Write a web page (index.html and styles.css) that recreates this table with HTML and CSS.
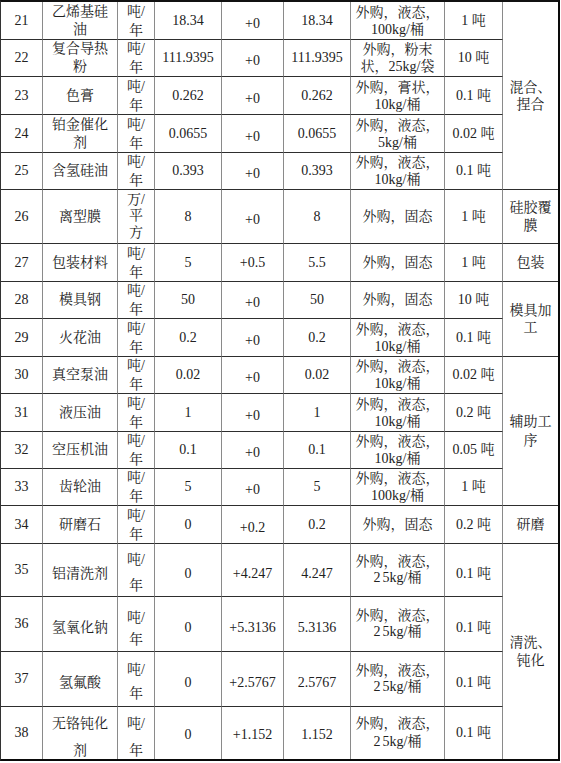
FILE: index.html
```html
<!DOCTYPE html>
<html lang="zh-CN">
<head>
<meta charset="utf-8">
<title>原辅材料表</title>
<link rel="stylesheet" href="styles.css">
</head>
<body>
<div class="sheet">
  <!-- 21 -->
  <div class="c">21</div>
  <div class="c">乙烯基硅<br>油</div>
  <div class="c u">吨/<br>年</div>
  <div class="c">18.34</div>
  <div class="c dn">+0</div>
  <div class="c">18.34</div>
  <div class="c s">外购，液态，<br>100kg/桶</div>
  <div class="c">1 吨</div>
  <div class="c last span5 p1">混合、<br>捏合</div>
  <!-- 22 -->
  <div class="c">22</div>
  <div class="c">复合导热<br>粉</div>
  <div class="c u">吨/<br>年</div>
  <div class="c">111.9395</div>
  <div class="c dn">+0</div>
  <div class="c">111.9395</div>
  <div class="c s">外购，粉末<br>状，25kg/袋</div>
  <div class="c">10 吨</div>
  <!-- 23 -->
  <div class="c">23</div>
  <div class="c">色膏</div>
  <div class="c u">吨/<br>年</div>
  <div class="c">0.262</div>
  <div class="c dn">+0</div>
  <div class="c">0.262</div>
  <div class="c s">外购，膏状，<br>10kg/桶</div>
  <div class="c">0.1 吨</div>
  <!-- 24 -->
  <div class="c">24</div>
  <div class="c">铂金催化<br>剂</div>
  <div class="c u">吨/<br>年</div>
  <div class="c">0.0655</div>
  <div class="c dn">+0</div>
  <div class="c">0.0655</div>
  <div class="c s">外购，液态，<br>5kg/桶</div>
  <div class="c">0.02 吨</div>
  <!-- 25 -->
  <div class="c">25</div>
  <div class="c">含氢硅油</div>
  <div class="c u">吨/<br>年</div>
  <div class="c">0.393</div>
  <div class="c dn">+0</div>
  <div class="c">0.393</div>
  <div class="c s">外购，液态，<br>10kg/桶</div>
  <div class="c">0.1 吨</div>
  <!-- 26 -->
  <div class="c">26</div>
  <div class="c">离型膜</div>
  <div class="c u3">万/<br>平<br>方</div>
  <div class="c">8</div>
  <div class="c dn">+0</div>
  <div class="c">8</div>
  <div class="c">外购，固态</div>
  <div class="c">1 吨</div>
  <div class="c last">硅胶覆<br>膜</div>
  <!-- 27 -->
  <div class="c">27</div>
  <div class="c">包装材料</div>
  <div class="c u">吨/<br>年</div>
  <div class="c">5</div>
  <div class="c">+0.5</div>
  <div class="c">5.5</div>
  <div class="c">外购，固态</div>
  <div class="c">1 吨</div>
  <div class="c last">包装</div>
  <!-- 28 -->
  <div class="c">28</div>
  <div class="c">模具钢</div>
  <div class="c u">吨/<br>年</div>
  <div class="c">50</div>
  <div class="c dn">+0</div>
  <div class="c">50</div>
  <div class="c">外购，固态</div>
  <div class="c">10 吨</div>
  <div class="c last span2 p2">模具加<br>工</div>
  <!-- 29 -->
  <div class="c">29</div>
  <div class="c">火花油</div>
  <div class="c u">吨/<br>年</div>
  <div class="c">0.2</div>
  <div class="c dn">+0</div>
  <div class="c">0.2</div>
  <div class="c s">外购，液态，<br>10kg/桶</div>
  <div class="c">0.1 吨</div>
  <!-- 30 -->
  <div class="c">30</div>
  <div class="c">真空泵油</div>
  <div class="c u">吨/<br>年</div>
  <div class="c">0.02</div>
  <div class="c dn">+0</div>
  <div class="c">0.02</div>
  <div class="c s">外购，液态，<br>10kg/桶</div>
  <div class="c">0.02 吨</div>
  <div class="c last span4 p4">辅助工<br>序</div>
  <!-- 31 -->
  <div class="c">31</div>
  <div class="c">液压油</div>
  <div class="c u">吨/<br>年</div>
  <div class="c">1</div>
  <div class="c dn">+0</div>
  <div class="c">1</div>
  <div class="c s">外购，液态，<br>10kg/桶</div>
  <div class="c">0.2 吨</div>
  <!-- 32 -->
  <div class="c">32</div>
  <div class="c">空压机油</div>
  <div class="c u">吨/<br>年</div>
  <div class="c">0.1</div>
  <div class="c dn">+0</div>
  <div class="c">0.1</div>
  <div class="c s">外购，液态，<br>10kg/桶</div>
  <div class="c">0.05 吨</div>
  <!-- 33 -->
  <div class="c">33</div>
  <div class="c">齿轮油</div>
  <div class="c u">吨/<br>年</div>
  <div class="c">5</div>
  <div class="c dn">+0</div>
  <div class="c">5</div>
  <div class="c s">外购，液态，<br>100kg/桶</div>
  <div class="c">1 吨</div>
  <!-- 34 -->
  <div class="c">34</div>
  <div class="c">研磨石</div>
  <div class="c u">吨/<br>年</div>
  <div class="c">0</div>
  <div class="c dn">+0.2</div>
  <div class="c">0.2</div>
  <div class="c">外购，固态</div>
  <div class="c">0.2 吨</div>
  <div class="c last">研磨</div>
  <!-- 35 -->
  <div class="c">35</div>
  <div class="c lo">铝清洗剂</div>
  <div class="c ua">吨/<br>年</div>
  <div class="c lo">0</div>
  <div class="c lo">+4.247</div>
  <div class="c lo">4.247</div>
  <div class="c s2"><span>外购，液态，<br><span class="sp">2</span>5kg/桶</span></div>
  <div class="c lo">0.1 吨</div>
  <div class="c last bot span4 p5">清洗、<br>钝化</div>
  <!-- 36 -->
  <div class="c">36</div>
  <div class="c lo">氢氧化钠</div>
  <div class="c ub">吨/<br>年</div>
  <div class="c lo">0</div>
  <div class="c lo">+5.3136</div>
  <div class="c lo">5.3136</div>
  <div class="c s2"><span>外购，液态，<br><span class="sp">2</span>5kg/桶</span></div>
  <div class="c lo">0.1 吨</div>
  <!-- 37 -->
  <div class="c">37</div>
  <div class="c lo">氢氟酸</div>
  <div class="c uc">吨/<br>年</div>
  <div class="c lo">0</div>
  <div class="c lo">+2.5767</div>
  <div class="c lo">2.5767</div>
  <div class="c s2"><span>外购，液态，<br><span class="sp">2</span>5kg/桶</span></div>
  <div class="c lo">0.1 吨</div>
  <!-- 38 -->
  <div class="c bot">38</div>
  <div class="c bot ud">无铬钝化<br>剂</div>
  <div class="c bot ud">吨/<br>年</div>
  <div class="c bot lo2">0</div>
  <div class="c bot lo2">+1.152</div>
  <div class="c bot lo2">1.152</div>
  <div class="c bot s3"><span>外购，液态，<br><span class="sp">2</span>5kg/桶</span></div>
  <div class="c bot">0.1 吨</div>
</div>
</body>
</html>
```
FILE: styles.css
```css
html, body {
  margin: 0;
  padding: 0;
  background: #ffffff;
}

.sheet {
  display: grid;
  width: max-content;
  grid-template-columns: 42px 75px 37px 67px 62px 67px 94px 58px 55px;
  grid-template-rows: 38px 37px 38px 38px 37px 54px 38px 37px 38px 37px 38px 37px 37px 38px 53px 55px 55px 52px;
  border-top: 2px solid #111111;
  border-left: 1px solid #333333;
  border-right: 2px solid #0a0a0a;
  border-bottom: 2px solid #0a0a0a;
  font-family: "Liberation Serif", "Noto Serif CJK SC", "Noto Sans CJK SC", serif;
  font-size: 14px;
  color: #222222;
}

.c {
  box-sizing: border-box;
  display: flex;
  align-items: center;
  justify-content: center;
  text-align: center;
  line-height: 18px;
  border-right: 1px solid #8a8a8a;
  border-bottom: 1px solid #2e2e2e;
  white-space: nowrap;
}

.last { border-right: none; grid-column: 9; }
.bot { border-bottom: none; }

.span2 { grid-row: span 2; }
.span4 { grid-row: span 4; }
.span5 { grid-row: span 5; }

.u { line-height: 19px; }
.u3 { line-height: 16.5px; }
.s { line-height: 17px; }
.s2 { line-height: 16px; }
.s3 { line-height: 18px; }
.dn { padding-top: 6px; }

.lo { padding-top: 8px; }
.lo2 { padding-top: 4px; }
.ua { line-height: 26px; padding-top: 5px; }
.ub { line-height: 22px; padding-top: 9px; }
.uc { line-height: 24px; padding-top: 5px; }
.ud { line-height: 27px; padding-top: 7px; }

.p1 { line-height: 17px; }
.p2 { line-height: 17px; }
.p4 { line-height: 19px; }
.p5 { line-height: 18px; }

.sp { margin-right: 2px; }
```
